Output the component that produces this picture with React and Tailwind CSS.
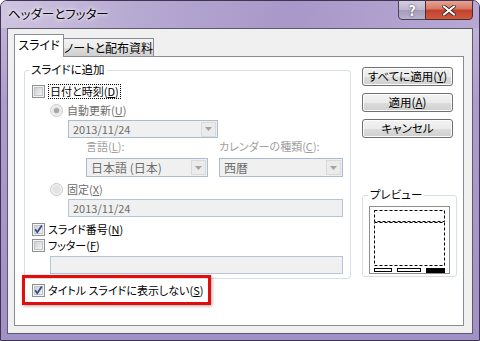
const FONT = "font-['Noto_Sans_CJK_JP','Liberation_Sans',sans-serif]";

function Check({ checked }) {
  return (
    <svg width="13" height="13" viewBox="0 0 13 13" className="shrink-0">
      <defs>
        <linearGradient id="cbg" x1="0" y1="0" x2="1" y2="1">
          <stop offset="0" stopColor="#c9cdd3" />
          <stop offset="1" stopColor="#f6f6f6" />
        </linearGradient>
      </defs>
      <rect x="0.5" y="0.5" width="12" height="12" fill="#f4f4f4" stroke="#8f9090" />
      <rect x="2.5" y="2.5" width="8" height="8" fill="url(#cbg)" stroke="#c3c5c9" />
      {checked && <path d="M3.2 6.3 L5.3 9.2 L9.8 2.6" fill="none" stroke="#3a4c90" strokeWidth="1.8" />}
    </svg>
  );
}

function Radio({ checked }) {
  return (
    <svg width="13" height="13" viewBox="0 0 13 13" className="shrink-0">
      <circle cx="6.5" cy="6.5" r="6" fill="#f3f3f3" stroke="#c6c6c6" />
      <circle cx="6.5" cy="6.5" r="4.2" fill="#e3e3e3" />
      {checked && <circle cx="6.5" cy="6.5" r="2.6" fill="#a6a6a6" />}
    </svg>
  );
}

function Combo({ value, className }) {
  return (
    <div className={`flex items-center border border-[#abbcd2] bg-[#f0f0f0] ${className}`}>
      <span className="flex-1 pl-[4px] text-[#6d6d6d]">{value}</span>
      <div className="mr-px flex h-[15px] w-[15px] items-center justify-center border border-[#dadada] bg-[#ebebeb]">
        <svg width="7" height="4" viewBox="0 0 7 4">
          <path d="M0 0h7L3.5 4z" fill="#a3a3a3" />
        </svg>
      </div>
    </div>
  );
}

function Button({ children }) {
  return (
    <div className="flex h-[19px] w-[91px] items-center justify-center rounded-[3px] border border-[#707070] bg-[linear-gradient(180deg,#f2f2f2_0%,#ebebeb_50%,#dddddd_51%,#cfcfcf_100%)] text-[11.5px] text-black shadow-[inset_0_0_0_1px_#fcfcfc]">
      {children}
    </div>
  );
}

function Preview() {
  return (
    <svg width="81" height="68" viewBox="0 0 81 68">
      <rect x="0.5" y="0.5" width="80" height="67" fill="#fff" stroke="#8e8e8e" />
      <rect x="5.5" y="4.5" width="70" height="11" fill="none" stroke="#000" strokeDasharray="3 2" />
      <rect x="5.5" y="16.5" width="70" height="43" fill="none" stroke="#000" strokeDasharray="3 2" />
      <rect x="5.5" y="62.5" width="17" height="3" fill="#fff" stroke="#000" />
      <rect x="28.5" y="62.5" width="23" height="3" fill="#fff" stroke="#000" />
      <rect x="57" y="62" width="19" height="5" fill="#000" />
    </svg>
  );
}

export default function App() {
  return (
    <div className={`${FONT} flex h-[341px] w-[480px] flex-col overflow-hidden whitespace-nowrap rounded-t-[7px] border border-[#3f3552] bg-[linear-gradient(180deg,#c6badc_0%,#ab9dcb_30%,#a091c6_100%)] text-[11px] leading-none [font-feature-settings:'palt']`}>
      {/* title bar */}
      <div className="flex h-[27px] shrink-0 items-start justify-between bg-[linear-gradient(100deg,#cfc5e1_0%,#b5a8d1_30%,#a898c9_60%,#b6a8d3_100%)] pl-[7px] pr-[6px]">
        <span className="mt-[7px] text-[12.5px] text-black [text-shadow:0_0_6px_#fff,0_0_3px_#fff]">ヘッダーとフッター</span>
        <div className="-mt-px flex">
          <div className="flex h-[20px] w-[28px] items-center justify-center rounded-bl-[4px] border border-[#4a4458] bg-[linear-gradient(180deg,#d3cde0_0%,#bdb5cf_50%,#a59cba_51%,#b8b0cc_100%)] text-[14px] font-bold text-white [text-shadow:0_0_2px_#333]">
            ?
          </div>
          <div className="-ml-px flex h-[20px] w-[48px] items-center justify-center rounded-br-[4px] border border-[#4a2a2a] bg-[linear-gradient(180deg,#e8a493_0%,#d47863_45%,#c0402c_50%,#d05a40_100%)]">
            <svg width="14" height="11" viewBox="0 0 14 11">
              <path d="M2 1.5 L12 9.5 M12 1.5 L2 9.5" stroke="#3a2020" strokeWidth="3.6" strokeLinecap="round" />
              <path d="M2 1.5 L12 9.5 M12 1.5 L2 9.5" stroke="#fff" strokeWidth="2.2" strokeLinecap="round" />
            </svg>
          </div>
        </div>
      </div>

      {/* client area */}
      <div className="mx-[6px] h-[306px] shrink-0 border border-[#5c5c68] bg-[#f0f0f0] pl-[6px] pt-[5px]">
        {/* tabs */}
        <div className="flex h-[22px] items-end">
          <div className="relative z-10 -mb-px flex h-[23px] w-[50px] items-center justify-center border border-b-0 border-[#898c95] bg-white pb-[2px] text-[12px] text-black">
            スライド
          </div>
          <div className="flex h-[18px] w-[90px] items-center justify-center border border-b-0 border-l-0 border-[#898c95] bg-[linear-gradient(180deg,#f3f3f3_0%,#ebebeb_50%,#dddddd_51%,#cfcfcf_100%)] text-[12px] text-black">
            ノートと配布資料
          </div>
        </div>

        {/* tab panel */}
        <div className="flex h-[270px] w-[450px] items-start border border-[#898c95] bg-white pl-[9px] pt-[13px] text-black">
          {/* left column */}
          <div className="flex w-[327px] flex-col">
            <div className="relative flex flex-col rounded-[3px] border border-[#d5dfe5] pb-[4px] pl-[7px] pt-[13px]">
              <span className="absolute -top-[7px] left-[4px] bg-white px-[2px] text-[11.5px]">スライドに追加</span>

              <div className="flex h-[14px] items-center gap-[3px]">
                <Check />
                <span className="border border-dotted border-black px-px py-px">
                  日付と時刻(<u>D</u>)
                </span>
              </div>

              <div className="ml-[18px] mt-[5px] flex h-[14px] items-center gap-[4px] text-[#6d6d6d]">
                <Radio checked />
                <span>自動更新(<u>U</u>)</span>
              </div>

              <Combo value="2013/11/24" className="ml-[36px] mt-[3px] h-[18px] w-[150px]" />

              <div className="ml-[54px] mt-[1px] flex h-[14px] items-center text-[#a0a0a0]">
                <span className="w-[133px]">言語(<u>L</u>):</span>
                <span>カレンダーの種類(<u>C</u>):</span>
              </div>

              <div className="ml-[54px] mt-[5px] flex h-[19px] gap-[11px]">
                <Combo value="日本語 (日本)" className="h-[19px] w-[122px] text-[12px]" />
                <Combo value="西暦" className="h-[19px] w-[124px] text-[12px]" />
              </div>

              <div className="ml-[18px] mt-[5px] flex h-[14px] items-center gap-[4px] text-[#6d6d6d]">
                <Radio />
                <span>固定(<u>X</u>)</span>
              </div>

              <div className="ml-[36px] mt-[3px] flex h-[18px] w-[275px] items-center border border-[#b5c6da] bg-[#f0f0f0] pl-[4px] text-[#6d6d6d]">
                2013/11/24
              </div>

              <div className="mt-[5px] flex h-[14px] items-center gap-[3px]">
                <Check checked />
                <span>スライド番号(<u>N</u>)</span>
              </div>

              <div className="mt-[2px] flex h-[14px] items-center gap-[3px]">
                <Check />
                <span>フッター(<u>F</u>)</span>
              </div>

              <div className="ml-[18px] mt-[4px] h-[18px] w-[293px] border border-[#b5c6da] bg-[#f0f0f0]" />
            </div>

            <div className="relative ml-[8px] mt-[4px] flex h-[14px] items-center gap-[3px]">
              <Check checked />
              <span>タイトル スライドに表示しない(<u>S</u>)</span>
              <div className="absolute -left-[10px] -top-[8px] h-[30px] w-[189px] border-[3px] border-[#e30d0d] shadow-[1px_1px_3px_rgba(0,0,0,0.35)]" />
            </div>
          </div>

          {/* right column */}
          <div className="ml-[11px] -mt-[3px] flex w-[95px] flex-col gap-[7px]">
            <Button>すべてに適用(<u>Y</u>)</Button>
            <Button>適用(<u>A</u>)</Button>
            <Button>キャンセル</Button>

            <div className="relative mt-[50px] h-[82px] w-[95px] rounded-[3px] border border-[#d5dfe5] pl-[6px] pt-[10px]">
              <span className="absolute -top-[7px] left-[5px] bg-white px-[2px] text-[11.5px]">プレビュー</span>
              <Preview />
            </div>
          </div>
        </div>
      </div>
    </div>
  );
}
